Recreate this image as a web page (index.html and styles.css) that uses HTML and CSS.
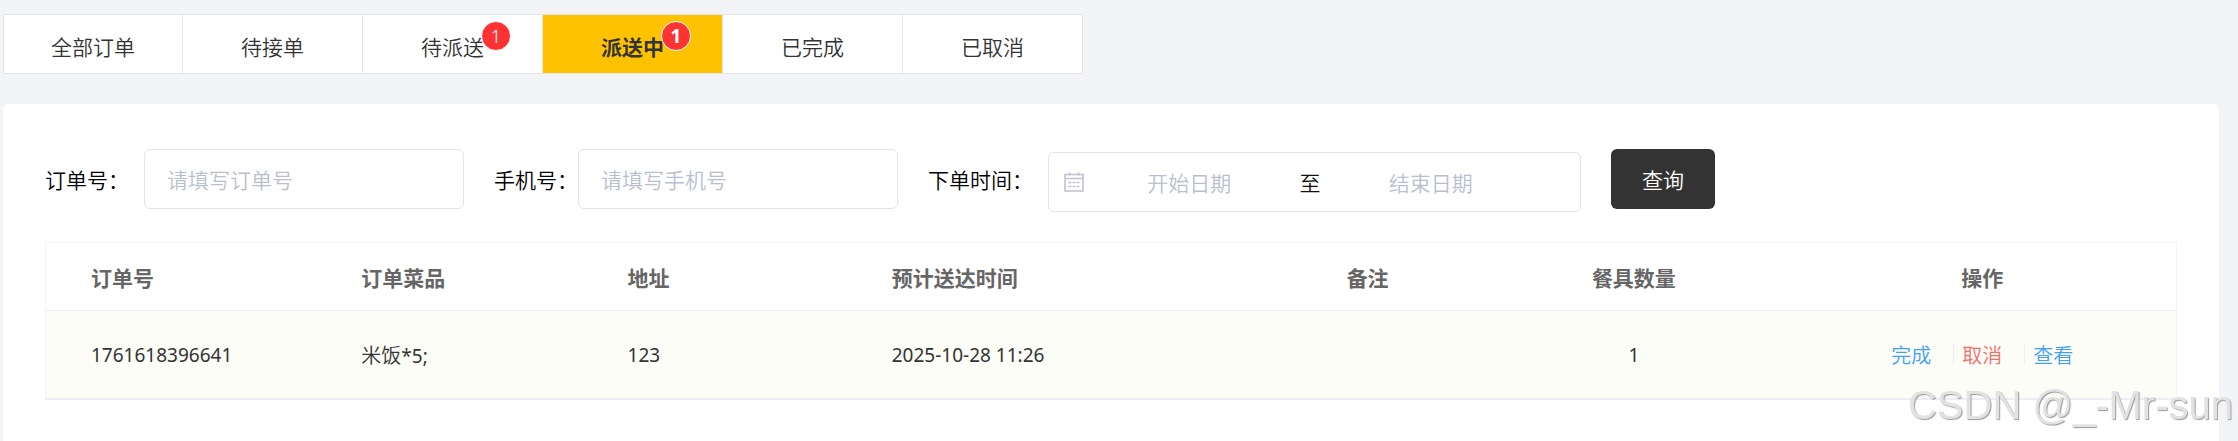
FILE: index.html
```
<!DOCTYPE html>
<html lang="zh-CN">
<head>
    <meta charset="UTF-8">
    <meta name="viewport" content="width=device-width, initial-scale=1.0">
    <title>订单管理</title>
    <link rel="stylesheet" href="styles.css">
</head>
<body>
    <nav class="tabs">
        <button type="button" class="tab">全部订单</button>
        <button type="button" class="tab">待接单</button>
        <button type="button" class="tab"><span class="tab-text">待派送<sup class="badge">1</sup></span></button>
        <button type="button" class="tab active"><span class="tab-text">派送中<sup class="badge">1</sup></span></button>
        <button type="button" class="tab">已完成</button>
        <button type="button" class="tab">已取消</button>
    </nav>

    <main class="container">
        <form class="search-bar">
            <label class="spaced" for="orderNumber">订单号：</label>
            <input type="text" class="field" id="orderNumber" name="orderNumber" placeholder="请填写订单号">
            <label for="phone">手机号：</label>
            <input type="text" class="field" id="phone" name="phone" placeholder="请填写手机号">
            <label class="spaced" for="beginTime">下单时间：</label>
            <div class="date-range">
                <svg class="date-icon" viewBox="0 0 20 20" fill="none" stroke="currentColor" aria-hidden="true">
                    <rect x="1" y="2.5" width="18" height="16.5" stroke-width="1.6"/>
                    <path d="M1 6.5h18M5.5 0.5v3M14.5 0.5v3" stroke-width="1.6"/>
                    <path d="M4.5 10.5h3M8.5 10.5h3M12.5 10.5h3M4.5 14.5h3M8.5 14.5h3M12.5 14.5h3" stroke-width="1.4"/>
                </svg>
                <input type="text" id="beginTime" name="beginTime" placeholder="开始日期">
                <span class="separator">至</span>
                <input type="text" id="endTime" name="endTime" placeholder="结束日期" aria-label="结束日期">
            </div>
            <button type="submit" class="search-btn">查询</button>
        </form>

        <table class="order-table">
            <colgroup>
                <col class="col-number">
                <col class="col-dishes">
                <col class="col-address">
                <col class="col-time">
                <col class="col-remark">
                <col class="col-tableware">
                <col class="col-actions">
            </colgroup>
            <thead>
                <tr>
                    <th>订单号</th>
                    <th>订单菜品</th>
                    <th>地址</th>
                    <th>预计送达时间</th>
                    <th class="center">备注</th>
                    <th class="center">餐具数量</th>
                    <th class="center">操作</th>
                </tr>
            </thead>
            <tbody>
                <tr>
                    <td class="num">1761618396641</td>
                    <td>米饭<span class="num">*5;</span></td>
                    <td class="num">123</td>
                    <td class="num">2025-10-28 11:26</td>
                    <td class="center"></td>
                    <td class="center num">1</td>
                    <td>
                        <div class="actions">
                            <button type="button" class="link blue">完成</button>
                            <button type="button" class="link red">取消</button>
                            <button type="button" class="link blue">查看</button>
                        </div>
                    </td>
                </tr>
            </tbody>
        </table>
    </main>

    <div class="watermark">CSDN @_-Mr-sun</div>
</body>
</html>
```
FILE: styles.css
```
* {
    box-sizing: border-box;
}
body {
    display: flex;
    flex-direction: column;
    min-height: 100vh;
    margin: 0;
    padding: 14px 19px 0 3px;
    background-color: #f3f4f8;
    color: #000;
    font-family: "Noto Sans CJK SC", sans-serif;
    font-size: 21px;
    font-weight: 350;
}
button, input {
    font: inherit;
}
button {
    cursor: pointer;
}

/* status tabs */
.tabs {
    display: flex;
    margin-bottom: 30px;
}
.tab {
    width: 180px;
    height: 60px;
    padding: 4px 0 0;
    border: 1px solid #e5e4e4;
    border-left: none;
    background-color: #fff;
    color: #333;
}
.tab:first-child {
    border-left: 1px solid #e5e4e4;
}
.tab.active {
    background-color: #ffc200;
    font-weight: bold;
}
.tab-text {
    position: relative;
}
.badge {
    position: absolute;
    top: -10px;
    left: 60px;
    width: 30px;
    height: 30px;
    border: 1px solid #fff;
    border-radius: 50%;
    background-color: #fd3333;
    color: #fff;
    font-family: "Noto Sans", sans-serif;
    font-size: 19px;
    line-height: 28px;
    text-align: center;
}

.container {
    flex: 1;
    padding: 45px 42px;
    border-radius: 6px 6px 0 0;
    background-color: #fff;
}

/* search form */
.search-bar {
    display: flex;
    align-items: flex-start;
    min-height: 63px;
    margin-bottom: 30px;
}
.search-bar label {
    line-height: 60px;
    white-space: nowrap;
}
.search-bar .spaced {
    margin-right: 15px;
}
.field {
    width: 320px;
    height: 60px;
    margin-right: 30px;
    padding: 0 22px;
    border: 1px solid #e4e4e4;
    border-radius: 6px;
    outline: none;
}
input::placeholder {
    color: #b9bfcd;
    opacity: 1;
}
.date-range {
    display: flex;
    align-items: center;
    align-self: flex-end;
    width: 533px;
    height: 60px;
    margin-right: 30px;
    padding: 0 44px 0 15px;
    border: 1px solid #e4e4e4;
    border-radius: 6px;
}
.date-icon {
    flex: none;
    width: 20px;
    height: 20px;
    color: #c0c4d0;
}
.date-range input {
    flex: 1;
    min-width: 0;
    padding: 0;
    border: none;
    outline: none;
    text-align: center;
}
.separator {
    width: 31px;
    color: #111;
    text-align: center;
}
.search-btn {
    width: 104px;
    height: 60px;
    padding: 0;
    border: none;
    border-radius: 6px;
    background-color: #333;
    color: #fff;
}

/* order list */
.order-table {
    width: 100%;
    border: 1px solid #f3f4f7;
    border-bottom-color: #ebeef5;
    border-spacing: 0;
    table-layout: fixed;
}
.col-number { width: 14.1%; }
.col-dishes { width: 12.5%; }
.col-address { width: 12.4%; }
.col-time { width: 17.8%; }
.col-remark { width: 10.5%; }
.col-tableware { width: 14.5%; }
.col-actions { width: 18.2%; }
.order-table th, .order-table td {
    padding: 0 15px;
    border-bottom: 1px solid #ebeef5;
    text-align: left;
}
.order-table th:first-child, .order-table td:first-child {
    padding-left: 45px;
}
.order-table th {
    height: 68px;
    color: #666;
    font-weight: bold;
}
.order-table td {
    height: 88px;
    background-color: #fcfdf7;
    color: #333;
    font-size: 20px;
}
.order-table .center {
    text-align: center;
}
.order-table .num {
    font-family: "Noto Sans", sans-serif;
    font-size: 19px;
    font-weight: normal;
}
.actions {
    display: flex;
    justify-content: center;
}
.link {
    padding: 0 22px 0 8px;
    border: none;
    border-right: 1px solid #ebeef5;
    background: none;
    line-height: 20px;
}
.link:first-child {
    padding-left: 0;
}
.link:last-child {
    padding-right: 0;
    border-right: none;
}
.blue {
    color: #409eff;
}
.red {
    color: #f56c6c;
}

.watermark {
    position: fixed;
    right: 5px;
    bottom: 13px;
    color: #e2e2e2;
    font-family: "Liberation Sans", sans-serif;
    font-size: 40px;
    line-height: 46px;
    text-shadow: 1px 1px 1px #999;
    white-space: nowrap;
    pointer-events: none;
}
```
